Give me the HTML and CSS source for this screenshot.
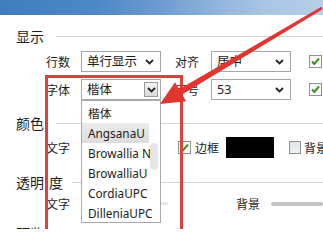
FILE: index.html
```html
<!DOCTYPE html>
<html lang="zh-CN">
<head>
<meta charset="utf-8">
<title>显示设置</title>
<link rel="stylesheet" href="styles.css">
</head>
<body>
<div class="page">
  <div class="banner"></div>
  <div class="content">
    <div class="gtitle g1"><span class="gt-text">显示</span><span class="gt-line"></span></div>
    <div class="row r1">
      <span class="lbl">行数</span>
      <div class="combo c-first"><span class="combo-text">单行显示</span><svg class="chev" width="9" height="6" viewBox="0 0 9 6"><polyline points="1,1 4.5,4.5 8,1"/></svg></div>
      <span class="lbl l2">对齐</span>
      <div class="combo c-second"><span class="combo-text">居中</span><svg class="chev" width="9" height="6" viewBox="0 0 9 6"><polyline points="1,1 4.5,4.5 8,1"/></svg></div>
      <span class="cb cb-end checked"><svg width="11" height="11" viewBox="0 0 11 11"><path d="M2 5.5 L4.3 8 L9 2.5"/></svg></span>
    </div>
    <div class="row r2">
      <span class="lbl">字体</span>
      <div class="combo c-first open"><span class="combo-text">楷体</span><span class="combo-btn"><svg class="chev" width="9" height="6" viewBox="0 0 9 6"><polyline points="1,1 4.5,4.5 8,1"/></svg></span></div>
      <span class="lbl l2">字号</span>
      <div class="combo c-second"><span class="combo-text">53</span><svg class="chev" width="9" height="6" viewBox="0 0 9 6"><polyline points="1,1 4.5,4.5 8,1"/></svg></div>
      <span class="cb cb-end checked"><svg width="11" height="11" viewBox="0 0 11 11"><path d="M2 5.5 L4.3 8 L9 2.5"/></svg></span>
    </div>

    <div class="gtitle g2"><span class="gt-text">颜色</span><span class="gt-line"></span></div>
    <div class="row crow">
      <span class="lbl">文字</span>
      <span class="cb cb-border checked"><svg width="11" height="11" viewBox="0 0 11 11"><path d="M2 5.5 L4.3 8 L9 2.5"/></svg></span>
      <span class="lbl cb-label">边框</span>
      <span class="swatch"></span>
      <span class="cb cb-bg"></span>
      <span class="lbl cb-label2">背景</span>
    </div>

    <div class="gtitle g3"><span class="gt-text">透明<span class="gt-gap">度</span></span><span class="gt-line line3"></span></div>
    <div class="row trow">
      <span class="lbl">文字</span>
      <span class="track track-text"></span>
      <span class="lbl bg-label">背景</span>
      <span class="track track-bg"></span>
    </div>

    <div class="gtitle g4"><span class="gt-text">预览</span></div>
  </div>

  <div class="dropdown">
    <div class="item">楷体</div>
    <div class="item sel">AngsanaU</div>
    <div class="item">Browallia N</div>
    <div class="item">BrowalliaU</div>
    <div class="item">CordiaUPC</div>
    <div class="item">DilleniaUPC</div>
    <span class="thumb"></span>
  </div>

  <div class="mark-box"></div>

  <svg class="arrow" width="323" height="229" viewBox="0 0 323 229">
    <polygon points="160,104 186.2,101.3 182.1,94.4 322.6,9.2 321.4,6.8 179.1,89.2 175,82.3"/>
  </svg>
</div>
</body>
</html>
```

FILE: styles.css
```css
body {
  margin: 0;
  background: #ffffff;
}

.page {
  position: relative;
  width: 323px;
  height: 229px;
  overflow: hidden;
  background: #ffffff;
  font-family: "Noto Sans", "Noto Sans CJK SC", sans-serif;
  font-size: 12px;
  color: #1c1c1c;
}

.banner {
  height: 15px;
  background: linear-gradient(90deg, #3f7dc0 0%, #4d88c8 30%, #6d9cd1 50%, #93b6dc 68%, #a8c5e3 82%, #b6cfe8 100%);
}

.content {
  padding-left: 16px;
}

.gtitle {
  display: flex;
  align-items: center;
  height: 18px;
}

.gt-text {
  font-family: "Noto Sans CJK SC", sans-serif;
  font-size: 14px;
  line-height: 18px;
  white-space: nowrap;
}

.gt-gap {
  margin-left: 5px;
}

.gt-line {
  flex: 1;
  height: 1px;
  background: #d3d3d3;
  margin-left: 12px;
}

.line3 {
  margin-left: 9px;
}

.g1 { margin-top: 12px; }
.g2 { margin-top: 14px; }
.g3 { margin-top: 15px; }
.g4 { margin-top: 10px; }

.row {
  display: flex;
  align-items: center;
  height: 21px;
  padding-left: 30px;
}

.r1 { margin-top: 6px; }
.r2 { margin-top: 7px; }
.crow { margin-top: 5px; }
.trow { margin-top: 2px; }

.lbl {
  font-family: "Noto Sans CJK SC", sans-serif;
  font-size: 12px;
  line-height: 16px;
  width: 24px;
  flex: none;
  white-space: nowrap;
}

.l2 { margin-left: 14px; }

.combo {
  flex: none;
  box-sizing: border-box;
  width: 80px;
  height: 21px;
  border: 1px solid #a6a6a6;
  background: #ffffff;
  display: flex;
  align-items: center;
  justify-content: space-between;
  padding: 0 6px 0 5px;
}

.c-first { margin-left: 11px; }
.c-second { margin-left: 12px; }

.combo-text {
  font-family: "Noto Sans", "Noto Sans CJK SC", sans-serif;
  font-size: 12.5px;
  line-height: 16px;
  white-space: nowrap;
}

.chev polyline {
  fill: none;
  stroke: #262626;
  stroke-width: 1.9;
}

.combo.open {
  padding-right: 2px;
}

.combo-btn {
  box-sizing: border-box;
  width: 14px;
  height: 15px;
  border: 1px solid #9c9c9c;
  background: linear-gradient(#f4f4f4, #d9d9d9);
  display: flex;
  align-items: center;
  justify-content: center;
}

.cb {
  flex: none;
  box-sizing: border-box;
  width: 13px;
  height: 13px;
  border: 1px solid #8e8f8f;
  background: linear-gradient(#dfe4ea, #eef1f4);
  display: flex;
  align-items: center;
  justify-content: center;
}

.cb.checked {
  background: linear-gradient(#f6f6f6, #ffffff);
}

.cb svg path {
  fill: none;
  stroke: #3f8e2c;
  stroke-width: 2;
}

.cb-end { margin-left: 18px; }
.cb-border { margin-left: 108px; }
.cb-label { margin-left: 4px; }

.swatch {
  flex: none;
  width: 48px;
  height: 21px;
  background: #000000;
  margin-left: 7px;
}

.cb-bg {
  width: 12px;
  margin-left: 15px;
}

.cb-label2 { margin-left: 3px; }

.track {
  flex: none;
  height: 4px;
  border-radius: 2px;
}

.track-text {
  width: 87px;
  margin-left: 11px;
  height: 3px;
  background: #e6e6e6;
}

.bg-label { margin-left: 68px; }

.track-bg {
  flex: 1;
  margin-left: 11px;
  background: #c3c3c3;
}

.dropdown {
  position: absolute;
  left: 81px;
  top: 100px;
  width: 80px;
  height: 123px;
  box-sizing: border-box;
  border: 1px solid #a9a9a9;
  background: #ffffff;
  padding-top: 2px;
}

.item {
  height: 20px;
  line-height: 20px;
  padding-left: 6px;
  margin-right: 11px;
  font-family: "Noto Sans", "Noto Sans CJK SC", sans-serif;
  font-size: 11.8px;
  white-space: nowrap;
  color: #1c1c1c;
}

.item.sel {
  background: linear-gradient(#ebebeb, #dcdcdc);
}

.thumb {
  position: absolute;
  left: 68px;
  top: 42px;
  width: 8px;
  height: 27px;
  border-radius: 4px;
  background: #e5e5e5;
}

.mark-box {
  position: absolute;
  left: 45px;
  top: 75px;
  width: 138px;
  height: 200px;
  box-sizing: border-box;
  border: 3px solid #d8423f;
}

.arrow {
  position: absolute;
  left: 0;
  top: 0;
  pointer-events: none;
}

.arrow polygon {
  fill: #e3352f;
}
```
